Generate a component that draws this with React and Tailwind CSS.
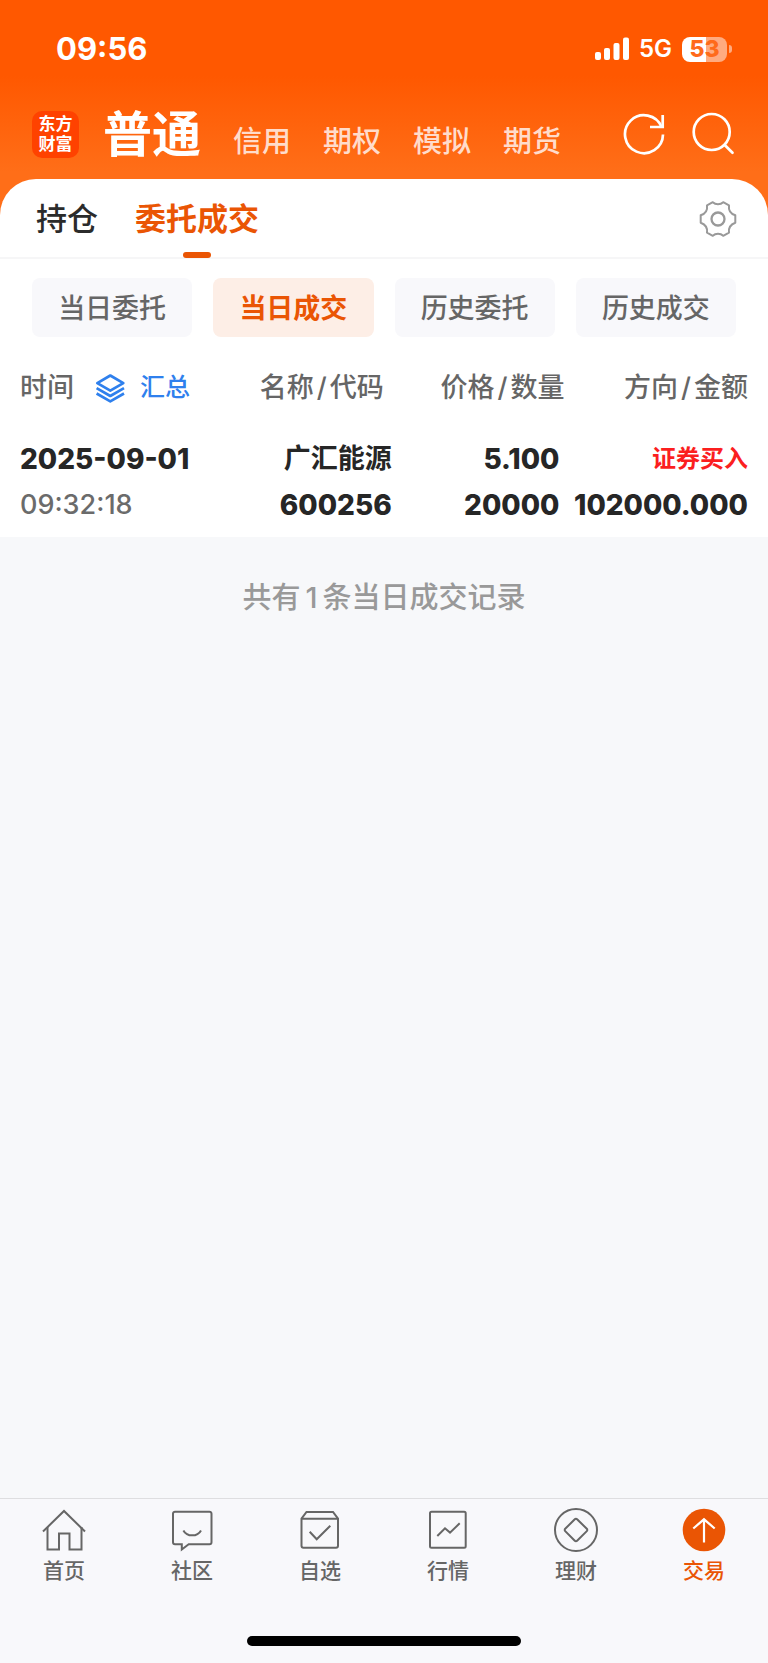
/**
 * TradeRecordsPage — "当日成交" view of the brokerage trading section.
 *
 * Layout, top to bottom:
 *   StatusBar     — clock, signal, battery
 *   AccountHeader — logo, account type switch, refresh and search
 *   Records panel — section tabs, range filters, deals table
 *   BottomNav     — six app sections plus the home indicator
 */
import { useState } from 'react';

const ACCOUNT_TYPES = ['普通', '信用', '期权', '模拟', '期货'];
const SECTIONS = ['持仓', '委托成交'];
const FILTERS = ['当日委托', '当日成交', '历史委托', '历史成交'];

const DEALS = [
  {
    date: '2025-09-01',
    time: '09:32:18',
    name: '广汇能源',
    code: '600256',
    price: '5.100',
    quantity: '20000',
    side: '证券买入',
    amount: '102000.000',
  },
];

const NAV_ITEMS = [
  {
    label: '首页',
    icon: (
      <>
        <path d="M1 23.5 22 3l21 20.5" />
        <path d="M5.5 19v22.5h11.5v-16h10.5v16h12V19" />
      </>
    ),
  },
  {
    label: '社区',
    icon: (
      <>
        <path d="M5 3.7h34.5a2 2 0 0 1 2 2v28.6a2 2 0 0 1-2 2H18.7L11.8 41.5v-5.2H5a2 2 0 0 1-2-2V5.7a2 2 0 0 1 2-2Z" />
        <path d="M13.4 22.4c3.6 6.6 14 6.6 17.6 0" />
      </>
    ),
  },
  {
    label: '自选',
    icon: (
      <>
        <path d="M3.5 10.7 8.5 4h26.5l5 6.7v27a2 2 0 0 1-2 2H5.5a2 2 0 0 1-2-2Z" />
        <path d="M3.5 10.7H40M11.7 23.7l7 7.5 13.6-13.5" />
      </>
    ),
  },
  {
    label: '行情',
    icon: (
      <>
        <rect x="4" y="3.7" width="35.7" height="36" rx="1.5" />
        <path d="m11.3 28 7.7-7.7 5 4.3 9.7-9.3" />
      </>
    ),
  },
  {
    label: '理财',
    icon: (
      <>
        <circle cx="22" cy="22" r="21" />
        <path d="M20.8 11.2a1.6 1.6 0 0 1 2.3 0l9.7 9.6a1.6 1.6 0 0 1 0 2.3l-9.7 9.7a1.6 1.6 0 0 1-2.3 0l-9.6-9.7a1.6 1.6 0 0 1 0-2.3Z" />
      </>
    ),
  },
  {
    label: '交易',
    icon: (
      <>
        <circle cx="22" cy="22" r="21.3" fill="currentColor" stroke="none" />
        <path d="M22 34.5V11.5M11.3 20.5 22 11.3l10.7 9.2" stroke="#fff" strokeWidth="2.2" />
      </>
    ),
  },
];

function StatusBar() {
  return (
    <div className="flex h-[98px] items-center justify-between pr-9 pl-14 text-white">
      <span className="text-[31px] font-bold">09:56</span>
      <div className="flex items-center">
        <svg width="34" height="24" viewBox="0 0 34 24" fill="currentColor" aria-hidden="true">
          <rect x="0" y="15" width="6" height="8" rx="2" />
          <rect x="9" y="11" width="6" height="12" rx="2" />
          <rect x="18.5" y="6" width="6" height="17" rx="2" />
          <rect x="28" y="0.5" width="6" height="22.5" rx="2" />
        </svg>
        <span className="ml-[10px] text-[24px] font-semibold">5G</span>
        <div className="ml-[10px] flex h-[25px] w-[45px] items-center justify-center rounded-[8px] bg-[linear-gradient(90deg,#fff_53%,#ffab80_53%)] text-[23px] leading-none font-extrabold text-[#ff6a1a]">
          53
        </div>
        <div className="ml-[2px] h-2 w-[3px] rounded-r-full bg-[#ffab80]" />
      </div>
    </div>
  );
}

function AccountHeader({ account, onSelect }) {
  return (
    <header className="flex h-[72px] items-center pr-[33px] pl-8 text-white">
      <div className="flex size-[47px] flex-shrink-0 flex-col items-center justify-center rounded-[10px] bg-[#ff4200] text-[17px] leading-[20px] font-bold">
        <span>东方</span>
        <span>财富</span>
      </div>
      <nav className="ml-6 flex flex-1 items-baseline gap-8 pt-[2px]">
        {ACCOUNT_TYPES.map((type) => (
          <button
            key={type}
            onClick={() => onSelect(type)}
            className={type === account
              ? 'text-[49px] leading-[62px] font-bold whitespace-nowrap'
              : 'text-[29px] leading-[40px] font-medium whitespace-nowrap text-[#ffdccb]'}
          >
            {type}
          </button>
        ))}
      </nav>
      <div className="flex flex-shrink-0 gap-[25px]">
        <button aria-label="刷新">
          <svg width="44" height="44" viewBox="0 0 44 44" fill="none" stroke="currentColor" strokeWidth="2.7">
            <path d="M41 22.5A19 19 0 1 1 39.6 15" />
            <path d="M40.7 3v12H28" />
          </svg>
        </button>
        <button aria-label="搜索">
          <svg width="44" height="44" viewBox="0 0 44 44" fill="none" stroke="currentColor" strokeWidth="2.7" strokeLinecap="round">
            <circle cx="20.7" cy="20" r="18" />
            <path d="m33.7 33 7.8 7.8" />
          </svg>
        </button>
      </div>
    </header>
  );
}

function SectionTabs({ section, onSelect }) {
  return (
    <div className="flex h-20 items-stretch border-b-2 border-[#f6f6f7] pr-[30px] pl-9">
      <div className="flex flex-1 gap-[37px]">
        {SECTIONS.map((name) => (
          <button
            key={name}
            onClick={() => onSelect(name)}
            className={`relative pt-[3px] text-[31px] ${name === section ? 'font-bold text-[#ea5504]' : 'font-medium text-[#2b2b2b]'}`}
          >
            {name}
            {name === section && (
              <span className="absolute -bottom-px left-1/2 h-[6px] w-7 -translate-x-1/2 rounded-[3px] bg-[#ea5504]" />
            )}
          </button>
        ))}
      </div>
      <button aria-label="设置" className="pt-[2px] text-[#999]">
        <svg width="40" height="40" viewBox="0 0 40 40" fill="none" stroke="currentColor" strokeWidth="2" strokeLinejoin="round">
          <path d="M14.8 3.2C17.5 5.8 22.500 5.8 25.200 3.200L31 6.300C30.200 12 32.500 14.600 37.300 16.300V23.700C32.500 25.400 30.200 28 31 33.700L25.200 36.800C22.500 34.200 17.500 34.200 14.800 36.800L9 33.700C9.800 28 7.500 25.400 2.700 23.700V16.300C7.500 14.600 9.800 12 9 6.300Z" />
          <circle cx="20" cy="20" r="6.5" strokeWidth="2.3" />
        </svg>
      </button>
    </div>
  );
}

// Column heading made of two fields, e.g. 名称/代码
function PairHeading({ first, second }) {
  return (
    <>
      {first}
      <span className="mx-[3px]">/</span>
      {second}
    </>
  );
}

function DealsTable() {
  return (
    <table className="w-full table-fixed text-[27px]">
      <thead>
        <tr className="h-[99px] text-right text-[#666]">
          <th className="w-[27%] pt-[3px] pl-5 text-left font-medium">
            <div className="flex items-center">
              时间
              <button className="ml-5 flex items-center gap-[14px] text-[25px] text-[#2f80ed]">
                <svg width="32" height="32" viewBox="0 0 32 32" fill="none" stroke="currentColor" strokeWidth="2.7" strokeLinejoin="round">
                  <path d="m16.3 3.5 13 7.6-13 7.6-13-7.6Z" />
                  <path d="m2.6 16.2 13.7 7.8L30 16.2M2.6 21.5l13.7 7.8L30 21.5" />
                </svg>
                汇总
              </button>
            </div>
          </th>
          <th className="w-[24%] pt-[3px] pr-2 font-medium"><PairHeading first="名称" second="代码" /></th>
          <th className="w-[22.5%] pt-[3px] font-medium"><PairHeading first="价格" second="数量" /></th>
          <th className="pt-[3px] pr-5 font-medium"><PairHeading first="方向" second="金额" /></th>
        </tr>
      </thead>
      <tbody>
        {DEALS.map((deal) => (
          <tr key={`${deal.date} ${deal.time}`} className="text-right text-[28px] leading-[46px] font-extrabold text-[#262626]">
            <td className="pb-[9px] pl-5 text-left">
              <p>{deal.date}</p>
              <p className="text-[27px] font-medium text-[#6b6b6b]">{deal.time}</p>
            </td>
            <td className="pb-[9px]">
              <p className="text-[27px] font-bold">{deal.name}</p>
              <p>{deal.code}</p>
            </td>
            <td className="pr-[5px] pb-[9px]">
              <p>{deal.price}</p>
              <p>{deal.quantity}</p>
            </td>
            <td className="pr-5 pb-[9px]">
              <p className="text-[24px] font-bold text-[#fb1f1f]">{deal.side}</p>
              <p>{deal.amount}</p>
            </td>
          </tr>
        ))}
      </tbody>
    </table>
  );
}

function BottomNav({ active, onSelect }) {
  return (
    <footer className="border-t border-[#dedee0] bg-[#f8f8fb]">
      <nav className="grid grid-cols-6 pt-[9px]">
        {NAV_ITEMS.map(({ label, icon }) => (
          <button
            key={label}
            onClick={() => onSelect(label)}
            className={`flex flex-col items-center gap-[7px] text-[21px] leading-[24px] font-medium ${label === active ? 'text-[#ea5504]' : 'text-[#666]'}`}
          >
            <svg width="44" height="44" viewBox="0 0 44 44" fill="none" stroke="currentColor" strokeWidth="2">
              {icon}
            </svg>
            {label}
          </button>
        ))}
      </nav>
      <div className="mx-auto mt-[53px] mb-[17px] h-[10px] w-[274px] rounded-full bg-black" />
    </footer>
  );
}

export default function App() {
  const [account, setAccount] = useState('普通');
  const [section, setSection] = useState('委托成交');
  const [filter, setFilter] = useState('当日成交');
  const [navItem, setNavItem] = useState('交易');

  return (
    <div className="flex min-h-screen flex-col bg-[#f7f8fa] font-['Inter','Noto_Sans_CJK_SC',sans-serif]">
      <div className="bg-[linear-gradient(180deg,#ff5800_0,#ff5800_76px,#ff6e18_172px)]">
        <StatusBar />
        <AccountHeader account={account} onSelect={setAccount} />
        {/* Gap between the account row and the rounded sheet */}
        <div className="h-[9px]" />
        <main className="rounded-t-[36px] bg-white">
          <SectionTabs section={section} onSelect={setSection} />
          <div className="grid grid-cols-4 gap-[21px] px-8 pt-[19px]">
            {FILTERS.map((name) => (
              <button
                key={name}
                onClick={() => setFilter(name)}
                className={`h-[59px] rounded-[8px] pt-[3px] text-[27px] ${name === filter ? 'bg-[#fdeee6] font-bold text-[#ea5504]' : 'bg-[#f8f8fb] font-medium text-[#666]'}`}
              >
                {name}
              </button>
            ))}
          </div>
          <DealsTable />
        </main>
      </div>
      <p className="flex-1 pt-[41px] text-center text-[29px] leading-[40px] font-medium text-[#999]">
        共有<span className="mx-[5px]">{DEALS.length}</span>条当日成交记录
      </p>
      <BottomNav active={navItem} onSelect={setNavItem} />
    </div>
  );
}
